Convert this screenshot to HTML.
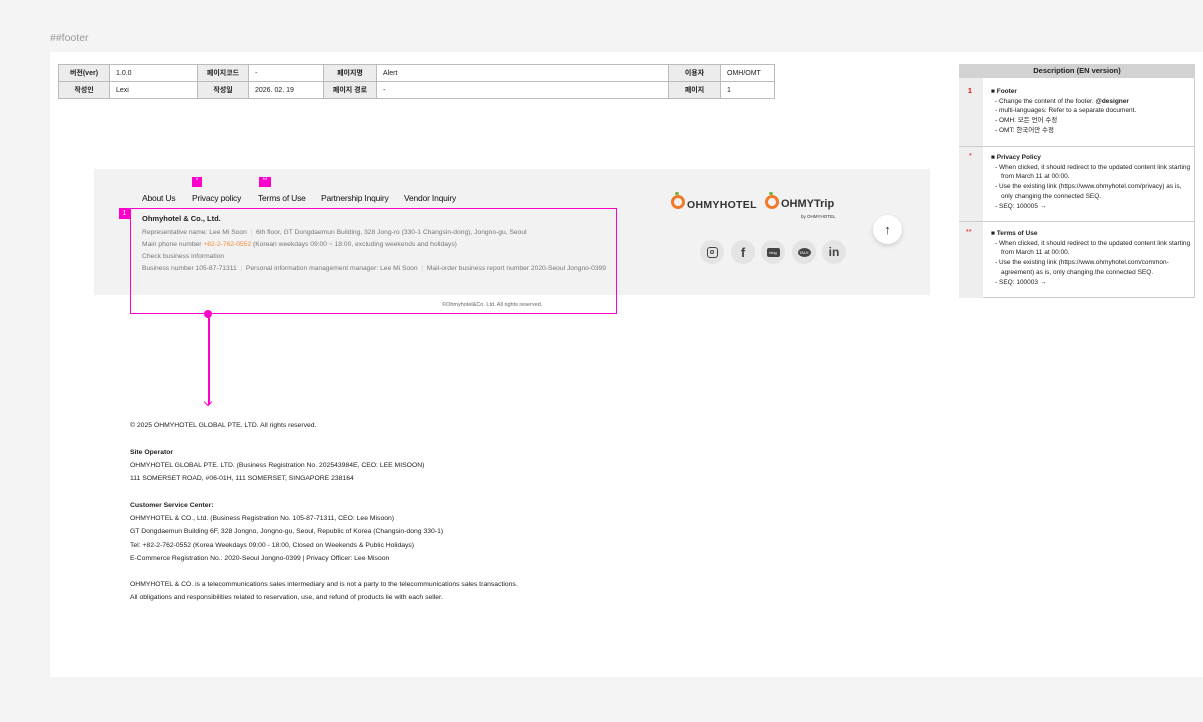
<!DOCTYPE html>
<html><head><meta charset="utf-8"><style>
*{margin:0;padding:0;box-sizing:border-box}
body{width:1203px;height:722px;background:#f4f4f4;font-family:"Liberation Sans","Noto Sans CJK KR",sans-serif;position:relative;overflow:hidden;color:#222}
.a{position:absolute}
.panel{left:50px;top:52px;width:1153px;height:625px;background:#fff}
table{border-collapse:collapse;font-size:7px}
td{border:1px solid #bbb;height:17px;padding:0 6px}
td.l{background:#ececec;text-align:center;font-weight:bold}
.ft{left:94px;top:169px;width:836px;height:126px;background:#f2f2f2}
.nav{font-size:8.5px;color:#111;top:193px;letter-spacing:-.2px}
.g{font-size:6.7px;color:#777}
.pk{background:#ff00cc}
.soc{width:24px;height:24px;border-radius:50%;background:#e4e4e4;top:240px;display:flex;align-items:center;justify-content:center}
.bt{font-size:6.8px;color:#222;left:130px}
.d{font-size:6.5px;color:#222;line-height:9.7px}
.d ul{list-style:none;margin-left:2px}
.d li:before{content:"- ";}
.d li{padding-left:8px;text-indent:-6px}
</style></head><body>
<div class="a" style="left:50px;top:32px;font-size:10.5px;color:#999">##footer</div>
<div class="a panel"></div>
<table class="a" style="left:58px;top:64px;width:717px">
<tr><td class="l" style="width:51px">버전(ver)</td><td style="width:88px">1.0.0</td><td class="l" style="width:51px">페이지코드</td><td style="width:75px">-</td><td class="l" style="width:53px">페이지명</td><td style="width:292px">Alert</td><td class="l" style="width:52px">이용자</td><td>OMH/OMT</td></tr>
<tr><td class="l">작성인</td><td>Lexi</td><td class="l">작성일</td><td>2026. 02. 19</td><td class="l">페이지 경로</td><td>-</td><td class="l">페이지</td><td>1</td></tr>
</table>
<div class="a ft"></div>
<div class="a nav" style="left:142px">About Us</div>
<div class="a nav" style="left:192px">Privacy policy</div>
<div class="a nav" style="left:258px">Terms of Use</div>
<div class="a nav" style="left:321px">Partnership Inquiry</div>
<div class="a nav" style="left:404px">Vendor Inquiry</div>
<div class="a pk" style="left:192px;top:177px;width:10px;height:10px;color:#fff;font-size:6px;text-align:center;line-height:8px">*</div>
<div class="a pk" style="left:259px;top:177px;width:12px;height:10px;color:#fff;font-size:6px;text-align:center;line-height:8px">**</div>
<div class="a" style="left:130px;top:208px;width:487px;height:106px;border:1.5px solid #ff00cc"></div>
<div class="a pk" style="left:119px;top:208px;width:11px;height:11px;color:#fff;font-size:7px;text-align:center;line-height:11px">1</div>
<div class="a" style="left:142px;top:214px;font-size:7.5px;font-weight:bold">Ohmyhotel &amp; Co., Ltd.</div>
<div class="a g" style="left:142px;top:229px">Representative name: Lee Mi Soon &nbsp;<span style="color:#ccc">|</span>&nbsp; 6th floor, GT Dongdaemun Building, 328 Jong-ro (330-1 Changsin-dong), Jongno-gu, Seoul</div>
<div class="a g" style="left:142px;top:241px">Main phone number <span style="color:#f08a3c">+82-2-762-0552</span> (Korean weekdays 09:00 ~ 18:00, excluding weekends and holidays)</div>
<div class="a g" style="left:142px;top:253px">Check business information</div>
<div class="a g" style="left:142px;top:265px">Business number 105-87-71311 &nbsp;<span style="color:#ccc">|</span>&nbsp; Personal information management manager: Lee Mi Soon &nbsp;<span style="color:#ccc">|</span>&nbsp; Mail-order business report number 2020-Seoul Jongno-0399</div>
<div class="a" style="left:442px;top:302px;font-size:5.5px;color:#666">©Ohmyhotel&amp;Co. Ltd. All rights reserved.</div>
<div class="a" style="left:208px;top:313px;width:1.5px;height:92px;background:#ff00cc"></div>
<div class="a" style="left:204px;top:310px;width:8px;height:8px;border-radius:50%;background:#ff00cc"></div>
<div class="a" style="left:205px;top:399px;width:6px;height:6px;border-right:1.5px solid #ff00cc;border-bottom:1.5px solid #ff00cc;transform:rotate(45deg)"></div>
<div class="a" style="left:671px;top:195px;width:14px;height:14px;border:3px solid #f07a28;border-radius:50%"></div>
<div class="a" style="left:675px;top:192px;width:4px;height:3px;background:#6bb33a;border-radius:50%"></div>
<div class="a" style="left:687px;top:199px;font-size:10.5px;font-weight:bold;color:#333;letter-spacing:.3px">OHMYHOTEL</div>
<div class="a" style="left:765px;top:195px;width:14px;height:14px;border:3px solid #f07a28;border-radius:50%"></div>
<div class="a" style="left:769px;top:192px;width:4px;height:3px;background:#6bb33a;border-radius:50%"></div>
<div class="a" style="left:781px;top:198px;font-size:11px;font-weight:bold;color:#333">OHMYTrip</div>
<div class="a" style="left:801px;top:214px;font-size:4.5px;color:#333">by OHMYHOTEL</div>
<div class="a" style="left:873px;top:215px;width:29px;height:29px;border-radius:50%;background:#fff;box-shadow:0 2px 5px rgba(0,0,0,.15);text-align:center;line-height:29px;font-size:13px;color:#333">↑</div>
<div class="a soc" style="left:700px"><div style="width:11px;height:11px;border:1.5px solid #444;border-radius:3px;position:relative"><div style="position:absolute;left:2px;top:2px;width:4px;height:4px;border:1.2px solid #444;border-radius:50%"></div></div></div>
<div class="a soc" style="left:731px;font-weight:bold;font-size:13px;color:#444">f</div>
<div class="a soc" style="left:761px"><div style="width:13px;height:9px;background:#444;border-radius:2px;font-size:4px;color:#fff;text-align:center;line-height:9px">blog</div></div>
<div class="a soc" style="left:792px"><div style="width:13px;height:9px;background:#444;border-radius:50%;font-size:4px;color:#fff;text-align:center;line-height:9px">TALK</div></div>
<div class="a soc" style="left:822px;font-weight:bold;font-size:12px;color:#444">in</div>
<div class="a bt" style="top:422px">© 2025 OHMYHOTEL GLOBAL PTE. LTD. All rights reserved.</div>
<div class="a bt" style="top:449px;font-weight:bold">Site Operator</div>
<div class="a bt" style="top:462px">OHMYHOTEL GLOBAL PTE. LTD. (Business Registration No. 202543984E, CEO: LEE MISOON)</div>
<div class="a bt" style="top:475px">111 SOMERSET ROAD, #06-01H, 111 SOMERSET, SINGAPORE 238164</div>
<div class="a bt" style="top:502px;font-weight:bold">Customer Service Center:</div>
<div class="a bt" style="top:515px">OHMYHOTEL &amp; CO., Ltd. (Business Registration No. 105-87-71311, CEO: Lee Misoon)</div>
<div class="a bt" style="top:528px">GT Dongdaemun Building 6F, 328 Jongno, Jongno-gu, Seoul, Republic of Korea (Changsin-dong 330-1)</div>
<div class="a bt" style="top:542px">Tel: +82-2-762-0552 (Korea Weekdays 09:00 - 18:00, Closed on Weekends &amp; Public Holidays)</div>
<div class="a bt" style="top:555px">E-Commerce Registration No.: 2020-Seoul Jongno-0399 | Privacy Officer: Lee Misoon</div>
<div class="a bt" style="top:581px">OHMYHOTEL &amp; CO. is a telecommunications sales intermediary and is not a party to the telecommunications sales transactions.</div>
<div class="a bt" style="top:594px">All obligations and responsibilities related to reservation, use, and refund of products lie with each seller.</div>
<div class="a" style="left:959px;top:64px;width:236px;height:234px;border:1px solid #ccc;background:#fff"></div>
<div class="a" style="left:959px;top:64px;width:236px;height:14px;background:#d2d2d2;font-size:7.5px;font-weight:bold;text-align:center;line-height:14px">Description (EN version)</div>
<div class="a" style="left:959px;top:78px;width:24px;height:220px;background:#eee"></div>
<div class="a" style="left:959px;top:146px;width:236px;height:1px;background:#ccc"></div>
<div class="a" style="left:959px;top:221px;width:236px;height:1px;background:#ccc"></div>
<div class="a" style="left:968px;top:88px;font-size:7px;color:#e00;font-weight:bold">1</div>
<div class="a" style="left:969px;top:153px;font-size:7px;color:#e00">*</div>
<div class="a" style="left:966px;top:229px;font-size:7px;color:#e00">**</div>
<div class="a d" style="left:991px;top:87px;width:200px"><b>■ Footer</b><ul><li>Change the content of the footer. <b>@designer</b></li><li>multi-languages: Refer to a separate document.</li><li>OMH: 모든 언어 수정</li><li>OMT: 한국어만 수정</li></ul></div>
<div class="a d" style="left:991px;top:153px;width:200px"><b>■ Privacy Policy</b><ul><li>When clicked, it should redirect to the updated content link starting from March 11 at 00:00.</li><li>Use the existing link (https://www.ohmyhotel.com/privacy) as is, only changing the connected SEQ.</li><li>SEQ: 100005 →</li></ul></div>
<div class="a d" style="left:991px;top:229px;width:200px"><b>■ Terms of Use</b><ul><li>When clicked, it should redirect to the updated content link starting from March 11 at 00:00.</li><li>Use the existing link (https://www.ohmyhotel.com/common-agreement) as is, only changing the connected SEQ.</li><li>SEQ: 100003 →</li></ul></div>
</body></html>
